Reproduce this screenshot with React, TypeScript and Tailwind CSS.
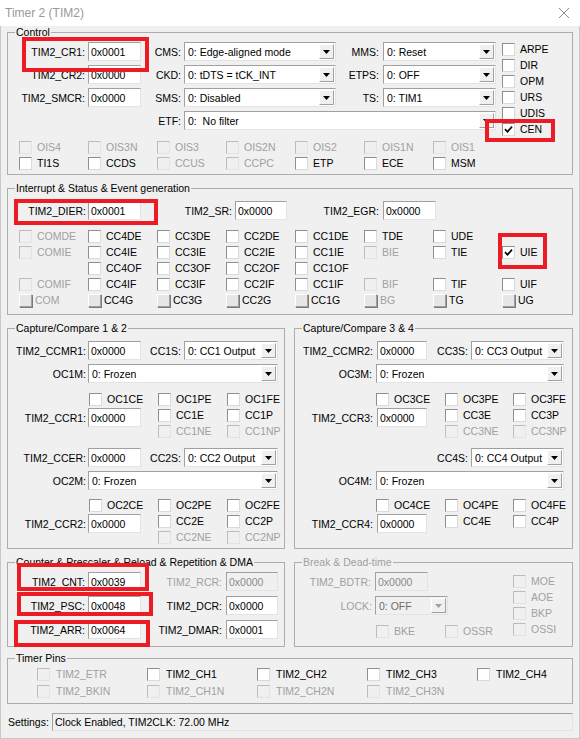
import type { ReactNode } from 'react'

function Box({ checked, disabled }: { checked?: boolean; disabled?: boolean }) {
  return (
    <span
      className={`flex h-[13px] w-[13px] shrink-0 items-center justify-center border ${
        disabled
          ? 'border-t-[#bcbcbc] border-l-[#bcbcbc] border-r-[#e3e3e3] border-b-[#e3e3e3] bg-[#f0f0f0]'
          : 'border-t-[#8e8e8e] border-l-[#8e8e8e] border-r-[#dadada] border-b-[#dadada] bg-white'
      }`}
    >
      {checked && (
        <svg width="9" height="9" viewBox="0 0 9 9">
          <path d="M1 4.2l2.5 2.6L8 1.6" fill="none" stroke="#000" strokeWidth="1.7" />
        </svg>
      )}
    </span>
  )
}

function Check({ label, checked, disabled, btn, wide }: { label: string; checked?: boolean; disabled?: boolean; btn?: boolean; wide?: boolean }) {
  return (
    <div className="flex h-[16px] items-center">
      {btn ? (
        <span className="h-[13px] w-[13px] shrink-0 border border-t-white border-l-white border-r-[#a0a0a0] border-b-[#a0a0a0] bg-[#e6e6e6] shadow-[1px_1px_0_#7a7a7a]" />
      ) : (
        <Box checked={checked} disabled={disabled} />
      )}
      <span className={`${btn ? 'ml-[3px]' : wide ? 'ml-[6px]' : 'ml-[5px]'} whitespace-nowrap ${disabled ? 'text-[#a0a0a0]' : 'text-black'}`}>
        {label}
      </span>
    </div>
  )
}

function Lbl({ children, className, disabled }: { children: ReactNode; className?: string; disabled?: boolean }) {
  return (
    <span className={`shrink-0 whitespace-nowrap text-right ${disabled ? 'text-[#a0a0a0]' : ''} ${className ?? ''}`}>{children}</span>
  )
}

function Edit({ value = '0x0000', className, disabled }: { value?: string; className?: string; disabled?: boolean }) {
  return (
    <div
      className={`flex h-[19px] shrink-0 items-center border border-t-[#a0a0a0] border-l-[#a0a0a0] border-r-[#e3e3e3] border-b-[#e3e3e3] pl-[2px] ${
        disabled ? 'bg-[#f0f0f0] text-[#8a8a8a]' : 'bg-white'
      } ${className ?? ''}`}
    >
      {value}
    </div>
  )
}

function Sel({ value, className, disabled }: { value: string; className?: string; disabled?: boolean }) {
  return (
    <div
      className={`flex h-[19px] shrink-0 items-stretch border border-t-[#a0a0a0] border-l-[#a0a0a0] border-r-[#e3e3e3] border-b-[#e3e3e3] ${
        disabled ? 'bg-[#f0f0f0] text-[#6d6d6d]' : 'bg-white'
      } ${className ?? ''}`}
    >
      <span className="flex flex-1 items-center overflow-hidden whitespace-pre pl-[3px]">{value}</span>
      <span className="m-[1px] flex w-[15px] items-center justify-center border border-t-white border-l-white border-r-[#a0a0a0] border-b-[#a0a0a0] bg-[#f0f0f0]">
        <svg width="7" height="4" viewBox="0 0 7 4">
          <path d="M0 0h7L3.5 4z" fill={disabled ? '#a0a0a0' : '#000'} />
        </svg>
      </span>
    </div>
  )
}

function Group({ title, disabled, className, children }: { title: string; disabled?: boolean; className?: string; children: ReactNode }) {
  return (
    <div className={`relative shrink-0 border border-[#adadad] ${className ?? ''}`}>
      <span className={`absolute left-[7px] top-[-7px] bg-[#f0f0f0] px-[1px] leading-[13px] whitespace-nowrap ${disabled ? 'text-[#a0a0a0]' : ''}`}>
        {title}
      </span>
      {children}
    </div>
  )
}

export default function App() {
  return (
    <div className="relative h-[739px] w-[580px] overflow-hidden bg-white font-['Liberation_Sans',Arial,sans-serif] text-[10.5px] leading-[12px] text-black">
      <div className="flex h-[26px] items-center justify-between pl-[5px] pr-[11px]">
        <span className="text-[12px] text-[#999]">Timer 2 (TIM2)</span>
        <svg width="10" height="10" viewBox="0 0 10 10">
          <path d="M0 0L10 10M10 0L0 10" stroke="#8a8a8a" strokeWidth="1" />
        </svg>
      </div>

      <div className="flex h-[713px] flex-col border-x border-b border-[#c8c8c8] bg-[#f0f0f0] px-[6px]">
        <Group title="Control" className="mt-[6px]">
          <div className="flex pt-[8px]">
            <div className="flex w-[488px] flex-col gap-[4px] pt-[1px]">
              <div className="flex items-center">
                <Lbl className="w-[80px] pr-[3px]">TIM2_CR1:</Lbl>
                <Edit value="0x0001" className="w-[53px]" />
                <Lbl className="w-[43px] pr-[3px]">CMS:</Lbl>
                <Sel value="0: Edge-aligned mode" className="w-[152px]" />
                <Lbl className="w-[47px] pr-[4px]">MMS:</Lbl>
                <Sel value="0: Reset" className="w-[113px]" />
              </div>
              <div className="flex items-center">
                <Lbl className="w-[80px] pr-[3px]">TIM2_CR2:</Lbl>
                <Edit className="w-[53px]" />
                <Lbl className="w-[43px] pr-[3px]">CKD:</Lbl>
                <Sel value="0: tDTS = tCK_INT" className="w-[152px]" />
                <Lbl className="w-[47px] pr-[4px]">ETPS:</Lbl>
                <Sel value="0: OFF" className="w-[113px]" />
              </div>
              <div className="flex items-center">
                <Lbl className="w-[80px] pr-[3px]">TIM2_SMCR:</Lbl>
                <Edit className="w-[53px]" />
                <Lbl className="w-[43px] pr-[3px]">SMS:</Lbl>
                <Sel value="0: Disabled" className="w-[152px]" />
                <Lbl className="w-[47px] pr-[4px]">TS:</Lbl>
                <Sel value="0: TIM1" className="w-[113px]" />
              </div>
              <div className="flex items-center">
                <Lbl className="w-[176px] pr-[3px]">ETF:</Lbl>
                <Sel value="0:  No filter" className="w-[312px]" />
              </div>
            </div>
            <div className="ml-[6px] flex flex-col">
              <Check label="ARPE" />
              <Check label="DIR" />
              <Check label="OPM" />
              <Check label="URS" />
              <Check label="UDIS" />
              <Check label="CEN" checked />
            </div>
          </div>
          <div className="mt-[2px] grid grid-cols-[repeat(7,69px)] pb-[3px] pl-[11px]">
            <Check label="OIS4" disabled />
            <Check label="OIS3N" disabled />
            <Check label="OIS3" disabled />
            <Check label="OIS2N" disabled />
            <Check label="OIS2" disabled />
            <Check label="OIS1N" disabled />
            <Check label="OIS1" disabled />
            <Check label="TI1S" />
            <Check label="CCDS" />
            <Check label="CCUS" disabled />
            <Check label="CCPC" disabled />
            <Check label="ETP" />
            <Check label="ECE" />
            <Check label="MSM" />
          </div>
        </Group>

        <Group title="Interrupt & Status & Event generation" className="mt-[13px]">
          <div className="flex items-center pt-[12px]">
            <Lbl className="w-[80px] pr-[2px]">TIM2_DIER:</Lbl>
            <Edit value="0x0001" className="w-[53px]" />
            <Lbl className="w-[94px] pr-[3px]">TIM2_SR:</Lbl>
            <Edit className="w-[52px]" />
            <Lbl className="w-[96px] pr-[4px]">TIM2_EGR:</Lbl>
            <Edit className="w-[53px]" />
          </div>
          <div className="mt-[8px] grid grid-cols-[repeat(8,69px)] pb-[6px] pl-[11px]">
            <Check label="COMDE" disabled />
            <Check label="CC4DE" />
            <Check label="CC3DE" />
            <Check label="CC2DE" />
            <Check label="CC1DE" />
            <Check label="TDE" />
            <Check label="UDE" />
            <div />

            <Check label="COMIE" disabled />
            <Check label="CC4IE" />
            <Check label="CC3IE" />
            <Check label="CC2IE" />
            <Check label="CC1IE" />
            <Check label="BIE" disabled />
            <Check label="TIE" />
            <Check label="UIE" checked />

            <div />
            <Check label="CC4OF" />
            <Check label="CC3OF" />
            <Check label="CC2OF" />
            <Check label="CC1OF" />
            <div />
            <div />
            <div />

            <Check label="COMIF" disabled />
            <Check label="CC4IF" />
            <Check label="CC3IF" />
            <Check label="CC2IF" />
            <Check label="CC1IF" />
            <Check label="BIF" disabled />
            <Check label="TIF" />
            <Check label="UIF" />

            <Check label="COM" btn disabled />
            <Check label="CC4G" btn />
            <Check label="CC3G" btn />
            <Check label="CC2G" btn />
            <Check label="CC1G" btn />
            <Check label="BG" btn disabled />
            <Check label="TG" btn />
            <Check label="UG" btn />
          </div>
        </Group>

        <div className="mt-[13px] flex gap-[9px]">
          <Group title="Capture/Compare 1 & 2" className="w-[278px]">
            <div className="pb-[3px] pt-[12px]">
              <div className="flex items-center">
                <Lbl className="w-[80px] pr-[2px]">TIM2_CCMR1:</Lbl>
                <Edit className="w-[53px]" />
                <Lbl className="w-[43px] pr-[3px]">CC1S:</Lbl>
                <Sel value="0: CC1 Output" className="w-[94px]" />
              </div>
              <div className="mt-[4px] flex items-center">
                <Lbl className="w-[80px] pr-[2px]">OC1M:</Lbl>
                <Sel value="0: Frozen" className="w-[190px]" />
              </div>
              <div className="mt-[8px] grid grid-cols-[81px_69px_69px_auto] grid-rows-[16px_16px_16px]">
                <div />
                <Check label="OC1CE" />
                <Check label="OC1PE" />
                <Check label="OC1FE" />
                <Lbl className="mt-[1px] flex h-[19px] items-center justify-end pr-[3px]">TIM2_CCR1:</Lbl>
                <Edit className="-ml-[1px] mt-[1px] w-[53px] self-start" />
                <Check label="CC1E" />
                <Check label="CC1P" />
                <div />
                <div />
                <Check label="CC1NE" disabled />
                <Check label="CC1NP" disabled />
              </div>
              <div className="mt-[9px] flex items-center">
                <Lbl className="w-[80px] pr-[2px]">TIM2_CCER:</Lbl>
                <Edit className="w-[53px]" />
                <Lbl className="w-[43px] pr-[3px]">CC2S:</Lbl>
                <Sel value="0: CC2 Output" className="w-[94px]" />
              </div>
              <div className="mt-[4px] flex items-center">
                <Lbl className="w-[80px] pr-[2px]">OC2M:</Lbl>
                <Sel value="0: Frozen" className="w-[190px]" />
              </div>
              <div className="mt-[7px] grid grid-cols-[81px_69px_69px_auto] grid-rows-[16px_16px_16px]">
                <div />
                <Check label="OC2CE" />
                <Check label="OC2PE" />
                <Check label="OC2FE" />
                <Lbl className="mt-[1px] flex h-[19px] items-center justify-end pr-[3px]">TIM2_CCR2:</Lbl>
                <Edit className="-ml-[1px] mt-[1px] w-[53px] self-start" />
                <Check label="CC2E" />
                <Check label="CC2P" />
                <div />
                <div />
                <Check label="CC2NE" disabled />
                <Check label="CC2NP" disabled />
              </div>
            </div>
          </Group>

          <Group title="Capture/Compare 3 & 4" className="flex-1">
            <div className="pb-[3px] pt-[12px]">
              <div className="flex items-center">
                <Lbl className="w-[82px] pr-[4px]">TIM2_CCMR2:</Lbl>
                <Edit className="w-[50px]" />
                <Lbl className="w-[44px] pr-[3px]">CC3S:</Lbl>
                <Sel value="0: CC3 Output" className="w-[93px]" />
              </div>
              <div className="mt-[4px] flex items-center">
                <Lbl className="w-[81px] pr-[4px]">OC3M:</Lbl>
                <Sel value="0: Frozen" className="w-[188px]" />
              </div>
              <div className="mt-[8px] grid grid-cols-[81px_69px_68px_auto] grid-rows-[16px_16px_16px]">
                <div />
                <Check label="OC3CE" />
                <Check label="OC3PE" />
                <Check label="OC3FE" />
                <Lbl className="mt-[1px] flex h-[19px] items-center justify-end pr-[3px]">TIM2_CCR3:</Lbl>
                <Edit className="ml-[1px] mt-[1px] w-[50px] self-start" />
                <Check label="CC3E" />
                <Check label="CC3P" />
                <div />
                <div />
                <Check label="CC3NE" disabled />
                <Check label="CC3NP" disabled />
              </div>
              <div className="mt-[9px] flex items-center">
                <Lbl className="w-[176px] pr-[3px]">CC4S:</Lbl>
                <Sel value="0: CC4 Output" className="w-[93px]" />
              </div>
              <div className="mt-[4px] flex items-center">
                <Lbl className="w-[81px] pr-[4px]">OC4M:</Lbl>
                <Sel value="0: Frozen" className="w-[188px]" />
              </div>
              <div className="mt-[7px] grid grid-cols-[81px_69px_68px_auto] grid-rows-[16px_16px_16px]">
                <div />
                <Check label="OC4CE" />
                <Check label="OC4PE" />
                <Check label="OC4FE" />
                <Lbl className="mt-[1px] flex h-[19px] items-center justify-end pr-[3px]">TIM2_CCR4:</Lbl>
                <Edit className="ml-[1px] mt-[1px] w-[50px] self-start" />
                <Check label="CC4E" />
                <Check label="CC4P" />
              </div>
            </div>
          </Group>
        </div>

        <div className="mt-[13px] flex gap-[9px]">
          <Group title="Counter & Prescaler & Reload & Repetition & DMA" className="w-[278px]">
            <div className="flex flex-col gap-[5px] pb-[7px] pt-[9px]">
              <div className="flex items-center">
                <Lbl className="w-[80px] pr-[3px]">TIM2_CNT:</Lbl>
                <Edit value="0x0039" className="w-[53px]" />
                <Lbl disabled className="w-[85px] pr-[4px]">TIM2_RCR:</Lbl>
                <Edit disabled className="w-[52px]" />
              </div>
              <div className="flex items-center">
                <Lbl className="w-[80px] pr-[3px]">TIM2_PSC:</Lbl>
                <Edit value="0x0048" className="w-[53px]" />
                <Lbl className="w-[85px] pr-[4px]">TIM2_DCR:</Lbl>
                <Edit className="w-[52px]" />
              </div>
              <div className="flex items-center">
                <Lbl className="w-[80px] pr-[3px]">TIM2_ARR:</Lbl>
                <Edit value="0x0064" className="w-[53px]" />
                <Lbl className="w-[85px] pr-[4px]">TIM2_DMAR:</Lbl>
                <Edit value="0x0001" className="w-[52px]" />
              </div>
            </div>
          </Group>

          <Group title="Break & Dead-time" disabled className="flex-1">
            <div className="flex pt-[9px]">
              <div className="flex w-[218px] flex-col">
                <div className="flex items-center">
                  <Lbl disabled className="w-[80px] pr-[4px]">TIM2_BDTR:</Lbl>
                  <Edit disabled className="w-[53px]" />
                </div>
                <div className="mt-[5px] flex items-center">
                  <Lbl disabled className="w-[80px] pr-[3px]">LOCK:</Lbl>
                  <Sel disabled value="0: OFF" className="w-[73px]" />
                </div>
                <div className="mt-[8px] grid grid-cols-[69px_69px] pl-[81px]">
                  <Check label="BKE" disabled />
                  <Check label="OSSR" disabled />
                </div>
              </div>
              <div className="mt-[1px] flex flex-col">
                <Check label="MOE" disabled />
                <Check label="AOE" disabled />
                <Check label="BKP" disabled />
                <Check label="OSSI" disabled />
              </div>
            </div>
          </Group>
        </div>

        <Group title="Timer Pins" className="mt-[11px]">
          <div className="grid grid-cols-[110px_110px_110px_110px_110px] grid-rows-[17px_17px] pb-[3px] pl-[29px] pt-[7px]">
            <Check label="TIM2_ETR" disabled wide />
            <Check label="TIM2_CH1" wide />
            <Check label="TIM2_CH2" wide />
            <Check label="TIM2_CH3" wide />
            <Check label="TIM2_CH4" wide />
            <Check label="TIM2_BKIN" disabled wide />
            <Check label="TIM2_CH1N" disabled wide />
            <Check label="TIM2_CH2N" disabled wide />
            <Check label="TIM2_CH3N" disabled wide />
          </div>
        </Group>

        <div className="mt-[9px] flex items-center">
          <span className="w-[45px] shrink-0 pl-[1px]">Settings:</span>
          <div className="flex h-[18px] flex-1 items-center border border-t-[#a0a0a0] border-l-[#a0a0a0] border-r-[#e3e3e3] border-b-[#e3e3e3] bg-[#f0f0f0] pl-[2px]">
            Clock Enabled, TIM2CLK: 72.00 MHz
          </div>
        </div>
      </div>

      {/* red highlight boxes drawn over the dialog */}
      <div className="pointer-events-none absolute left-[22px] top-[37px] h-[35px] w-[127px] border-[4px] border-[#ed1c24]" />
      <div className="pointer-events-none absolute left-[485px] top-[119px] h-[23px] w-[70px] border-[4px] border-[#ed1c24]" />
      <div className="pointer-events-none absolute left-[14px] top-[199px] h-[26px] w-[144px] border-[4px] border-[#ed1c24]" />
      <div className="pointer-events-none absolute left-[498px] top-[233px] h-[36px] w-[49px] border-[4px] border-[#ed1c24]" />
      <div className="pointer-events-none absolute left-[17px] top-[563px] h-[28px] w-[132px] border-[4px] border-[#ed1c24]" />
      <div className="pointer-events-none absolute left-[17px] top-[592px] h-[24px] w-[136px] border-[4px] border-[#ed1c24]" />
      <div className="pointer-events-none absolute left-[14px] top-[620px] h-[27px] w-[136px] border-[4px] border-[#ed1c24]" />
    </div>
  )
}
